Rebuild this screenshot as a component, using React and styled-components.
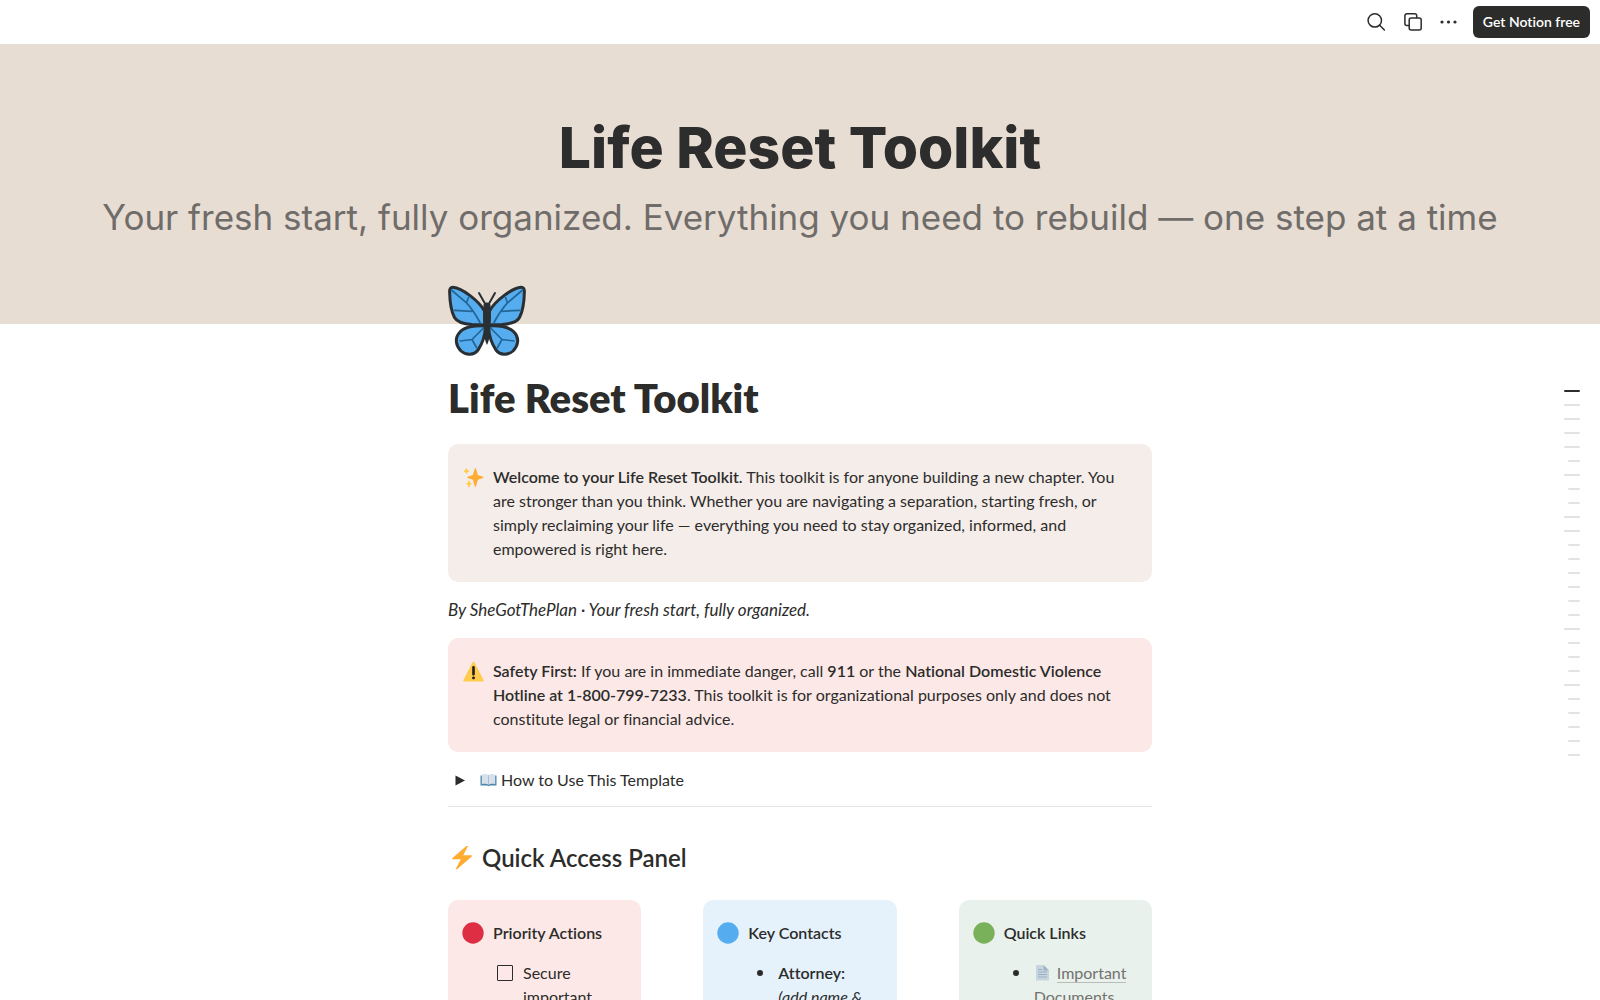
import * as React from 'react';
import styled, { createGlobalStyle } from 'styled-components';

const textColor = '#2c2c2b';
const fontStack = `Lato, "Liberation Sans", sans-serif`;

const tones = {
  brown: '#f5edea',
  red: '#fce9e7',
  blue: '#e5f2fc',
  green: '#e8f1ec'
};

const GlobalStyle = createGlobalStyle`
  * {
    box-sizing: border-box;
  }

  body {
    margin: 0;
    background: #fff;
    color: ${textColor};
    font-family: ${fontStack};
    font-size: 16px;
    font-variant-ligatures: none;
    line-height: 24px;
  }

  b {
    font-weight: 600;
  }
`;

const AppElem = styled.div`
  height: 100vh;
  display: flex;
  flex-direction: column;
  overflow: hidden;
`;

const HeaderElem = styled.header`
  display: flex;
  flex: none;
  align-items: center;
  justify-content: flex-end;
  height: 44px;
  padding: 0 10px;

  > .getNotion {
    height: 32px;
    margin-left: 6px;
    padding: 0 10px;
    border-radius: 6px;
    background: ${textColor};
    color: white;
    font-size: 14px;
    font-weight: 600;
    line-height: 32px;
    text-decoration: none;
  }
`;

const IconButton = styled.button`
  display: inline-flex;
  align-items: center;
  justify-content: center;
  width: 36px;
  height: 32px;
  padding: 0;
  border: none;
  border-radius: 6px;
  background: none;
  color: ${textColor};
  cursor: pointer;

  :hover {
    background: #f1f1f0;
  }
`;

const ScrollElem = styled.main`
  flex: 1;
  min-height: 0;
  overflow: hidden;
`;

const CoverElem = styled.div`
  display: flex;
  flex-direction: column;
  align-items: center;
  height: 280px;
  padding-top: 68px;
  background: #e8ddd3;
  font-family: Inter, "Liberation Sans", sans-serif;
  white-space: nowrap;

  > .coverTitle {
    color: #2d2d2d;
    font-size: 57px;
    font-weight: 800;
    line-height: 72px;
  }

  > .coverText {
    color: #6f6c69;
    font-size: 35px;
    line-height: 66px;
  }
`;

const PageElem = styled.article`
  width: 704px;
  max-width: 100%;
  margin: 0 auto;

  > .pageIcon {
    position: relative;
    display: block;
    width: 78px;
    height: 78px;
    margin-top: -40px;
  }
`;

const Title = styled.h1`
  margin: 12px 0 22px;
  font-size: 40px;
  font-weight: 800;
  line-height: 48px;
`;

const CalloutElem = styled.section`
  display: flex;
  gap: 7px;
  padding: 21px 12px;
  border-radius: 10px;
  background: ${props => tones[props.$tone]};

  > .icon {
    display: flex;
    flex: none;
    align-items: center;
    justify-content: center;
    width: 26px;
    height: 24px;
  }

  > .content {
    flex: 1;
    min-width: 0;
    padding-right: 16px;
  }
`;

const Byline = styled.p`
  margin: 16px 0;
  font-size: 17px;
  font-style: italic;
`;

const ToggleElem = styled.div`
  display: flex;
  align-items: center;
  margin-top: 16px;
  padding-bottom: 14px;
  border-bottom: 1px solid #e6e5e3;

  > button {
    display: flex;
    align-items: center;
    justify-content: center;
    width: 24px;
    height: 24px;
    margin-right: 8px;
    padding: 0;
    border: none;
    background: none;
    color: ${textColor};
  }

  > .book {
    margin-right: 4px;
  }
`;

const Heading = styled.h2`
  display: flex;
  align-items: center;
  gap: 8px;
  margin: 35px 0 26px;
  padding-left: 2px;
  font-size: 24px;
  font-weight: 600;
  line-height: 32px;
`;

const Columns = styled.div`
  display: grid;
  grid-template-columns: repeat(3, 1fr);
  gap: 62px;
`;

const CardTitle = styled.h3`
  margin: 0 -16px 16px 0;
  font-size: 16px;
  font-weight: 600;
  line-height: 24px;
`;

const TodoElem = styled.label`
  display: flex;
  gap: 10px;
  padding-left: 4px;

  > input {
    appearance: none;
    flex: none;
    width: 16px;
    height: 16px;
    margin: 4px 0;
    border: 1px solid ${textColor};
    border-radius: 1px;
  }
`;

const BulletList = styled.ul`
  margin: 0 -16px 0 0;
  padding: 0;
  list-style: none;

  > li {
    display: flex;
  }

  > li::before {
    content: '';
    flex: none;
    width: 6px;
    height: 6px;
    margin: 9px 15px 0 9px;
    border-radius: 50%;
    background: ${textColor};
  }

  a {
    color: #73726e;
    text-decoration: none;
  }

  a > span {
    border-bottom: 1px solid #b9bcb8;
  }

  a > svg {
    margin-right: 3px;
    vertical-align: -2px;
  }
`;

const OutlineElem = styled.nav`
  position: absolute;
  top: 390px;
  right: 20px;
  display: flex;
  flex-direction: column;
  align-items: flex-end;
  gap: 12px;
`;

const OutlineMark = styled.a`
  width: ${props => (props.$nested ? '12px' : '16px')};
  height: 2px;
  border-radius: 2px;
  background: ${props => (props.$current ? textColor : '#e3e3e2')};
`;

function SearchIcon() {
  return (
    <svg width="20" height="20" viewBox="0 0 20 20" fill="none" stroke="currentColor" strokeWidth="1.5" strokeLinecap="round">
      <circle cx="7.8" cy="8.4" r="6.7" />
      <path d="M12.700 13.300l4.700 4.700" />
    </svg>
  );
}

function DuplicateIcon() {
  return (
    <svg width="20" height="20" viewBox="0 0 20 20" fill="none" stroke="currentColor" strokeWidth="1.5" strokeLinejoin="round">
      <rect x="6.2" y="6" width="12" height="12" rx="2" />
      <path d="M6 13.600H3.900a2 2 0 0 1-2-2V3.800a2 2 0 0 1 2-2h7.800a2 2 0 0 1 2 2V6" />
    </svg>
  );
}

function MoreIcon() {
  return (
    <svg width="20" height="20" viewBox="0 0 20 20" fill="currentColor">
      <circle cx="3" cy="10" r="1.600" />
      <circle cx="9.500" cy="10" r="1.600" />
      <circle cx="16" cy="10" r="1.600" />
    </svg>
  );
}

function ButterflyWing() {
  return (
    <g strokeLinejoin="round" strokeLinecap="round">
      <path
        d="M37.500 41C36 38 37 31 36.500 27C31 17 14 4 5 3.300C2.500 3.200 1.600 5 1.600 7.500C1.800 17 3.500 28 6.500 33.500C9 38 16 40 24 40.500Z"
        fill="#55acee" stroke="#292f33" strokeWidth="3"
      />
      <path
        d="M37.500 42C29 41 17 42.500 12 48C6 54 8 62 13 67C18 71.500 26 71.500 30 66C33.500 61 37 53 37.500 42Z"
        fill="#55acee" stroke="#292f33" strokeWidth="3"
      />
      <path
        d="M4 6.500L18.500 18.800C22 22.500 28 31 32 38.500M18.500 18.800L20.500 13.500M6.500 26.300L24 27.300M35.500 44L24 55.500L12 57M24 55.500L28.500 63.500"
        fill="none" stroke="#226699" strokeWidth="1.700"
      />
      <path d="M37.500 20.500L31 9" fill="none" stroke="#292f33" strokeWidth="2" />
    </g>
  );
}

function Butterfly() {
  return (
    <svg className="pageIcon" viewBox="0 0 78 78">
      <ButterflyWing />
      <g transform="translate(78 0) scale(-1 1)">
        <ButterflyWing />
      </g>
      <path d="M39 18.500c2.600 0 3.700 1.200 3.500 3.500l-.2 5c1 6-.2 15-.4 21-.2 5-1 9.500-2.900 13-1.900-3.500-2.700-8-2.900-13-.2-6-1.400-15-.4-21l-.2-5c-.2-2.300.9-3.500 3.500-3.500z" fill="#292f33" />
    </svg>
  );
}

function Sparkles() {
  return (
    <svg width="21" height="21" viewBox="0 0 36 36">
      <path fill="#FFAC33" d="M34.347 16.893l-8.899-3.294-3.323-10.891c-.128-.42-.517-.708-.956-.708-.439 0-.828.288-.956.708l-3.322 10.891-8.9 3.294c-.393.146-.653.519-.653.938 0 .418.26.793.653.938l8.895 3.293 3.324 11.223c.126.424.516.715.959.715.442 0 .833-.291.959-.716l3.324-11.223 8.896-3.293c.391-.144.652-.518.652-.937 0-.418-.261-.792-.653-.938z" />
      <path fill="#FFCC4D" d="M14.347 27.894l-2.314-.856-.9-3.300c-.118-.436-.513-.738-.964-.738-.451 0-.846.302-.965.737l-.9 3.300-2.313.856c-.393.145-.653.520-.653.938 0 .418.260.793.653.938l2.301.853.907 3.622c.112.444.511.756.970.756.459 0 .858-.312.970-.757l.907-3.622 2.301-.853c.393-.144.653-.519.653-.937 0-.418-.260-.793-.653-.937zM10.009 6.231l-2.364-.875-.876-2.365c-.145-.393-.519-.653-.938-.653-.418 0-.792.260-.938.653l-.875 2.365-2.365.875c-.393.146-.653.520-.653.938 0 .418.260.793.653.938l2.365.875.875 2.365c.146.393.520.653.938.653.418 0 .792-.260.938-.653l.875-2.365 2.365-.875c.393-.146.653-.520.653-.938 0-.418-.260-.792-.653-.938z" />
    </svg>
  );
}

function Warning() {
  return (
    <svg width="21" height="21" viewBox="0 0 36 36">
      <path fill="#FFCC4D" d="M2.653 35C.811 35-.001 33.662.847 32.027L16.456 1.972c.849-1.635 2.238-1.635 3.087 0l15.609 30.056c.85 1.634.037 2.972-1.805 2.972H2.653z" />
      <path fill="#231F20" d="M15.583 28.953c0-1.333 1.085-2.418 2.419-2.418 1.333 0 2.418 1.085 2.418 2.418 0 1.334-1.086 2.419-2.418 2.419-1.334 0-2.419-1.085-2.419-2.419zm.186-18.293c0-1.302.961-2.108 2.232-2.108 1.241 0 2.233.837 2.233 2.108v11.938c0 1.271-.992 2.108-2.233 2.108-1.271 0-2.232-.807-2.232-2.108V10.660z" />
    </svg>
  );
}

function Bolt() {
  return (
    <svg width="24" height="24" viewBox="0 1 36 36">
      <path fill="#FFAC33" d="M32.938 15.651C32.792 15.260 32.418 15 32 15H19.925L26.890 1.458c.219-.426.106-.947-.271-1.243C26.437.071 26.218 0 26 0c-.233 0-.466.082-.653.243L18 6.588 3.347 19.243c-.316.273-.430.714-.284 1.105S3.582 21 4 21h12.075L9.110 34.542c-.219.426-.106.947.271 1.243.182.144.401.215.619.215.233 0 .466-.082.653-.243L18 29.412l14.653-12.655c.317-.273.430-.714.285-1.106z" />
    </svg>
  );
}

function Dot({ color }) {
  return (
    <svg width="22" height="22" viewBox="0 0 36 36">
      <circle cx="18" cy="18" r="17.500" fill={color} />
    </svg>
  );
}

function Book() {
  return (
    <svg className="book" width="17" height="16" viewBox="0 0 17 16">
      <path d="M.5 3.500h16v10H10l-1.500.8-1.500-.8H.5z" fill="#4d86ad" />
      <path d="M1.800 2.600C4 1.800 6.800 1.800 8.500 3c1.700-1.200 4.500-1.200 6.700-.4v9.600c-2.200-.7-5-.6-6.700.7-1.700-1.300-4.500-1.400-6.700-.7z" fill="#d6e1ea" />
      <path d="M8.500 3v9.900" stroke="#a3b7c6" strokeWidth=".8" />
    </svg>
  );
}

function PageEmoji() {
  return (
    <svg width="16" height="16" viewBox="0 0 16 16">
      <path d="M2 0h7.500L15 5.500V15.500H2z" fill="#c7d5e1" />
      <path d="M9.500 0v5.500H15z" fill="#9fb4c6" />
      <path d="M4 4.500h4M4 7h9M4 9.500h9M4 12h9" stroke="#9bafc0" />
    </svg>
  );
}

function Header() {
  return (
    <HeaderElem>
      <IconButton aria-label="Search"><SearchIcon /></IconButton>
      <IconButton aria-label="Duplicate"><DuplicateIcon /></IconButton>
      <IconButton aria-label="More"><MoreIcon /></IconButton>
      <a className="getNotion" href="#signup">Get Notion free</a>
    </HeaderElem>
  );
}

function Callout({ tone, icon, children }) {
  return (
    <CalloutElem $tone={tone}>
      <span className="icon">{icon}</span>
      <div className="content">{children}</div>
    </CalloutElem>
  );
}

// 1 = top level heading, 2 = nested heading
const outline = [1, 1, 1, 1, 1, 2, 1, 2, 2, 1, 1, 2, 2, 2, 2, 2, 2, 1, 2, 2, 2, 1, 2, 2, 2, 2, 2];

function Outline() {
  return (
    <OutlineElem aria-label="Outline">
      {outline.map((level, i) => (
        <OutlineMark
          key={i}
          href={`#section-${i + 1}`}
          aria-label={`Section ${i + 1}`}
          $nested={level === 2}
          $current={i === 0}
        />
      ))}
    </OutlineElem>
  );
}

export default function App() {
  return (
    <AppElem>
      <GlobalStyle />
      <Header />
      <ScrollElem>
        <CoverElem>
          <div className="coverTitle">Life Reset Toolkit</div>
          <div className="coverText">
            Your fresh start, fully organized. Everything you need to rebuild — one step at a time
          </div>
        </CoverElem>
        <PageElem>
          <Butterfly />
          <Title>Life Reset Toolkit</Title>
          <Callout tone="brown" icon={<Sparkles />}>
            <b>Welcome to your Life Reset Toolkit.</b> This toolkit is for anyone building a new
            chapter. You are stronger than you think. Whether you are navigating a separation,
            starting fresh, or simply reclaiming your life — everything you need to stay
            organized, informed, and empowered is right here.
          </Callout>
          <Byline>By SheGotThePlan · Your fresh start, fully organized.</Byline>
          <Callout tone="red" icon={<Warning />}>
            <b>Safety First:</b> If you are in immediate danger, call <b>911</b> or
            the <b>National Domestic Violence Hotline at 1-800-799-7233</b>. This toolkit is for
            organizational purposes only and does not constitute legal or financial advice.
          </Callout>
          <ToggleElem>
            <button aria-label="Open">
              <svg width="10" height="11" viewBox="0 0 10 11" fill="currentColor">
                <path d="M.5.500v10L10 5.500z" />
              </svg>
            </button>
            <Book />
            How to Use This Template
          </ToggleElem>
          <Heading><Bolt />Quick Access Panel</Heading>
          <Columns>
            <Callout tone="red" icon={<Dot color="#dd2e44" />}>
              <CardTitle>Priority Actions</CardTitle>
              <TodoElem>
                <input type="checkbox" />
                <span>Secure important</span>
              </TodoElem>
            </Callout>
            <Callout tone="blue" icon={<Dot color="#55acee" />}>
              <CardTitle>Key Contacts</CardTitle>
              <BulletList>
                <li><span><b>Attorney:</b> <br /><i>(add name &amp;</i></span></li>
              </BulletList>
            </Callout>
            <Callout tone="green" icon={<Dot color="#78b159" />}>
              <CardTitle>Quick Links</CardTitle>
              <BulletList>
                <li>
                  <a href="#important-documents"><PageEmoji /> <span>Important Documents</span></a>
                </li>
              </BulletList>
            </Callout>
          </Columns>
        </PageElem>
      </ScrollElem>
      <Outline />
    </AppElem>
  );
}
